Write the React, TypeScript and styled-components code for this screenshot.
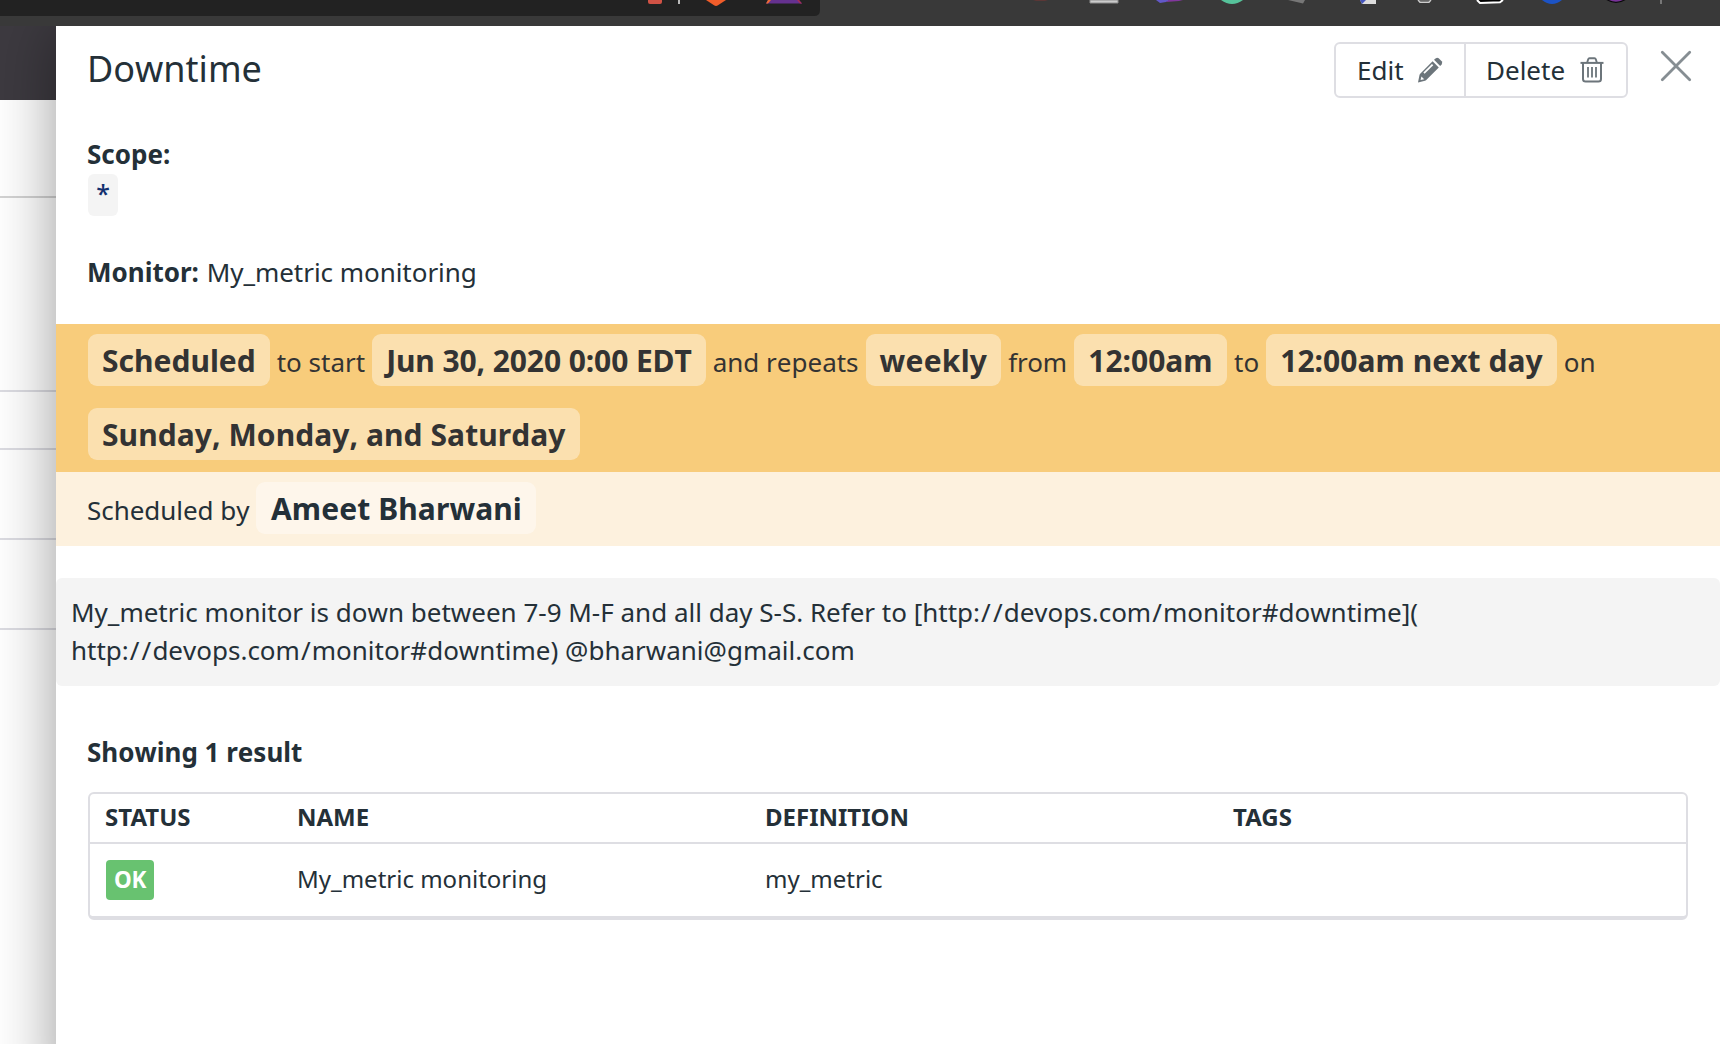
import React from "react";
import styled, { createGlobalStyle } from "styled-components";

const ink = "#243038";
const line = "#dedee3";

const GlobalStyle = createGlobalStyle`
  *, *::before, *::after { box-sizing: border-box; }
  html, body { margin: 0; padding: 0; }
  body {
    width: 1720px;
    height: 1044px;
    overflow: hidden;
    background: #fff;
    color: ${ink};
    font-family: "Noto Sans", "Open Sans", sans-serif;
    font-size: 26px;
    line-height: 38px;
    font-kerning: none;
  }
`;

const Screen = styled.div`
  display: flex;
  flex-direction: column;
  width: 1720px;
  height: 1044px;
  overflow: hidden;
`;

const BrowserBar = styled.header`
  flex: none;
  height: 26px;
  background: #393939;
`;

const BarDrawing = styled.svg`
  display: block;
`;

const Workspace = styled.div`
  flex: 1;
  display: flex;
  overflow: hidden;
`;

const Underlay = styled.aside`
  flex: none;
  width: 56px;
  display: flex;
  flex-direction: column;
`;

const UnderlayHeader = styled.div`
  height: 74px;
  background: #3d3a40;
`;

const UnderlayRow = styled.div<{ $height: number; $tone?: string }>`
  height: ${(p) => p.$height}px;
  border-bottom: 2px solid ${(p) => p.$tone ?? "#dcdce2"};
`;

const Panel = styled.main`
  flex: 1;
  position: relative;
  display: flex;
  flex-direction: column;
  margin-bottom: -60px;
  background: #fff;
  box-shadow: 0 0 60px rgba(0, 0, 0, 0.4);
`;

const PanelHeader = styled.div`
  display: flex;
  align-items: flex-start;
  height: 109px;
  padding: 16px 28px 0 31px;
`;

const Title = styled.h1`
  flex: 1;
  margin: 0;
  padding-top: 1px;
  font-size: 36px;
  line-height: 52px;
  font-weight: 400;
`;

const ButtonGroup = styled.div`
  display: flex;
  width: 294px;
  height: 56px;
  border: 2px solid ${line};
  border-radius: 6px;
`;

const Button = styled.button<{ $width: number; $divided?: boolean }>`
  display: flex;
  align-items: center;
  justify-content: space-between;
  width: ${(p) => p.$width}px;
  padding: ${(p) => (p.$divided ? "0 22px 0 20px" : "0 21px")};
  border: 0;
  border-left: ${(p) => (p.$divided ? `2px solid ${line}` : "0")};
  background: none;
  color: inherit;
  font: inherit;
`;

const CloseButton = styled.button`
  display: flex;
  margin: 8px 0 0 32px;
  padding: 0;
  border: 0;
  background: none;
`;

const Field = styled.div<{ $height: number }>`
  height: ${(p) => p.$height}px;
  padding-left: 31px;
`;

const FieldValue = styled.span`
  margin-left: 1px;
  letter-spacing: -0.04px;
`;

const ScopeTag = styled.code`
  display: block;
  width: 30px;
  height: 42px;
  margin: 1px 0 0 1px;
  border-radius: 6px;
  background: #f4f4f4;
  color: #12306f;
  font-family: "Noto Sans", sans-serif;
  font-size: 25px;
  font-weight: 500;
  line-height: 38px;
  text-align: center;
`;

const Banner = styled.section<{ $light?: boolean }>`
  display: flex;
  flex-wrap: wrap;
  align-items: baseline;
  align-content: flex-start;
  column-gap: 7px;
  row-gap: 22px;
  height: ${(p) => (p.$light ? 74 : 148)}px;
  padding: 10px 100px 0 ${(p) => (p.$light ? 31 : 32)}px;
  background: ${(p) => (p.$light ? "#fdf1de" : "#f8cc7b")};
  color: ${(p) => (p.$light ? ink : "#333")};
`;

const Words = styled.span<{ $tracking?: number }>`
  letter-spacing: ${(p) => p.$tracking ?? 0}px;
`;

const Pill = styled.strong<{ $tracking?: number; $inset?: number }>`
  height: 52px;
  padding: 0 ${(p) => p.$inset ?? 14}px;
  border-radius: 9px;
  background: rgba(255, 255, 255, 0.4);
  font-size: 30px;
  line-height: 54px;
  letter-spacing: ${(p) => p.$tracking ?? 0}px;
`;

const Note = styled.p`
  height: 108px;
  margin: 32px 0 0;
  padding: 15px;
  border-radius: 6px;
  background: #f4f4f4;
`;

const Slash = styled.span`
  margin-left: 1px;
  letter-spacing: 1.1px;
`;

const ResultCount = styled.h2`
  margin: 47px 0 0 31px;
  font-size: 26px;
  line-height: 38px;
`;

const Table = styled.div`
  width: 1600px;
  height: 128px;
  margin: 21px 0 0 32px;
  border: 2px solid ${line};
  border-bottom-width: 4px;
  border-radius: 6px;
  font-size: 24px;
`;

const TableRow = styled.div<{ $head?: boolean }>`
  display: grid;
  grid-template-columns: 192px 468px 468px 1fr;
  align-items: center;
  height: ${(p) => (p.$head ? 50 : 74)}px;
  padding: 0 0 ${(p) => (p.$head ? 0 : 2)}px 15px;
  border-bottom: ${(p) => (p.$head ? `2px solid ${line}` : "0")};
  font-weight: ${(p) => (p.$head ? 700 : 400)};
  font-kerning: ${(p) => (p.$head ? "normal" : "none")};
`;

const Cell = styled.span`
  line-height: 36px;
  padding-bottom: 2px;
`;

const Status = styled.span`
  display: block;
  width: 48px;
  height: 40px;
  margin-left: 1px;
  border-radius: 4px;
  background: #68c270;
  color: #fff;
  font-size: 22.5px;
  font-weight: 700;
  line-height: 39px;
  text-align: center;
  letter-spacing: -0.3px;
`;

const BrowserIcons = () => (
  <BarDrawing width="1720" height="26" viewBox="0 0 1720 26">
    <path d="M0 0H820V10Q820 16 814 16H0Z" fill="#222" />
    <path d="M648 0H662V2Q662 4 660 4H650Q648 4 648 2Z" fill="#d05245" />
    <rect x="678" width="2" height="4" fill="#bbb" />
    <path d="M706 0H726L718 5.3Q716 6.6 714 5.3Z" fill="#f15d2a" />
    <path d="M768 0H799L802 3.5H766Z" fill="#65318f" />
    <path d="M768 0H771L768 3.5H766Z" fill="#ee6b32" />
    <path d="M797 0H799L802 3.5H800Z" fill="#a92c55" />
    <path d="M1033 0H1048L1045 1H1036Z" fill="#5b3736" />
    <path d="M1090 0H1118V3H1090Z" fill="#ccc" stroke="#8d8d8d" />
    <path d="M1156 0H1170L1166 2L1160 3Z" fill="#6258c8" />
    <path d="M1169 0H1183L1179 1L1166 2Z" fill="#82379d" />
    <path d="M1221 0Q1232 8 1243 0Z" fill="#56c39b" />
    <path d="M1288 0H1305L1303 3.5Z" fill="#777" />
    <path d="M1360 0H1376V4H1362Z" fill="#ddd" />
    <path d="M1360 0H1366L1362 4Z" fill="#4555bd" />
    <path d="M1418 0L1420 2.3H1429L1431 0" fill="#666" stroke="#ccc" strokeWidth="1.3" />
    <path d="M1477 0L1480 3L1500 2.2L1503 0" fill="#000" stroke="#fff" strokeWidth="2" />
    <path d="M1542 0Q1552 8 1562 0Z" fill="#1c53c5" />
    <path d="M1606 -1Q1616 5.8 1626 -1Z" fill="#793399" stroke="#090909" strokeWidth="1.2" />
    <rect x="1660" width="2" height="4" fill="#777" />
  </BarDrawing>
);

const PencilIcon = () => (
  <svg width="26" height="26" viewBox="0 0 26 26">
    <path d="M15.6 4.2L21.8 10.4L9 23.2Q8.6 23.6 8 23.8L1 25.4L2.4 18.4Q2.5 17.4 3.2 16.7Z" fill="#6c757b" />
    <path d="M17 2.8L18.6 1.4Q20.2 .2 21.7 1.3L24.7 4.3Q25.8 5.8 24.6 7.4L23.2 9Z" fill="#6c757b" />
    <path d="M7 16.2L15.6 7.6" stroke="#fff" strokeWidth="1.8" />
    <path d="M4.4 19.4L7.2 22.2L3.6 23.1Z" fill="#fff" />
  </svg>
);

const TrashIcon = () => (
  <svg width="24" height="26" viewBox="0 0 24 26" fill="none" stroke="#6c757b">
    <path d="M.5 5.9H23.5" strokeWidth="2" />
    <path d="M7.2 5.5L8.2 2.2Q8.5 1.2 9.5 1.2H14.5Q15.5 1.2 15.8 2.2L16.8 5.5" strokeWidth="1.9" />
    <path d="M3 6V22Q3 24.6 5.6 24.6H18.4Q21 24.6 21 22V6" strokeWidth="2" />
    <path d="M8 10V20.5M12 10V20.5M16 10V20.5" strokeWidth="1.8" />
  </svg>
);

const CloseIcon = () => (
  <svg width="32" height="32" viewBox="0 0 32 32">
    <path d="M2.3 2.3L29.7 29.7M29.7 2.3L2.3 29.7" stroke="#868e93" strokeWidth="2.8" strokeLinecap="round" />
  </svg>
);

const DowntimeUrl = () => (
  <>
    http:<Slash>/</Slash><Slash>/</Slash>devops.com<Slash>/</Slash>monitor#downtime
  </>
);

export default function App() {
  return (
    <Screen>
      <GlobalStyle />
      <BrowserBar>
        <BrowserIcons />
      </BrowserBar>
      <Workspace>
        <Underlay>
          <UnderlayHeader />
          <UnderlayRow $height={98} $tone="#d3d3d3" />
          <UnderlayRow $height={194} />
          <UnderlayRow $height={58} />
          <UnderlayRow $height={90} />
          <UnderlayRow $height={90} />
        </Underlay>
        <Panel>
          <PanelHeader>
            <Title>Downtime</Title>
            <ButtonGroup>
              <Button $width={128}>Edit <PencilIcon /></Button>
              <Button $width={162} $divided>Delete <TrashIcon /></Button>
            </ButtonGroup>
            <CloseButton aria-label="Close"><CloseIcon /></CloseButton>
          </PanelHeader>
          <Field $height={118}>
            <strong>Scope:</strong>
            <ScopeTag>*</ScopeTag>
          </Field>
          <Field $height={71}>
            <strong>Monitor:</strong> <FieldValue>My_metric monitoring</FieldValue>
          </Field>
          <Banner>
            <Pill>Scheduled</Pill> <Words>to start</Words>
            <Pill $tracking={-0.1}>Jun 30, 2020 0:00 EDT</Pill> <Words>and repeats</Words>
            <Pill $tracking={0.25}>weekly</Pill> <Words $tracking={-0.3}>from</Words>
            <Pill $inset={14.5}>12:00am</Pill> <Words>to</Words>
            <Pill $tracking={0.05}>12:00am next day</Pill> <Words>on</Words>
            <Pill $tracking={0.07}>Sunday, Monday, and Saturday</Pill>
          </Banner>
          <Banner $light>
            <Words $tracking={-0.04}>Scheduled by</Words>
            <Pill $tracking={0.1} $inset={14.5}>Ameet Bharwani</Pill>
          </Banner>
          <Note>
            My_metric monitor is down between 7-9 M-F and all day S-S. Refer to [<DowntimeUrl />](
            <br />
            <DowntimeUrl />) @bharwani@gmail.com
          </Note>
          <ResultCount>Showing 1 result</ResultCount>
          <Table>
            <TableRow $head>
              <Cell>STATUS</Cell>
              <Cell>NAME</Cell>
              <Cell>DEFINITION</Cell>
              <Cell>TAGS</Cell>
            </TableRow>
            <TableRow>
              <Status>OK</Status>
              <Cell>My_metric monitoring</Cell>
              <Cell>my_metric</Cell>
            </TableRow>
          </Table>
        </Panel>
      </Workspace>
    </Screen>
  );
}
